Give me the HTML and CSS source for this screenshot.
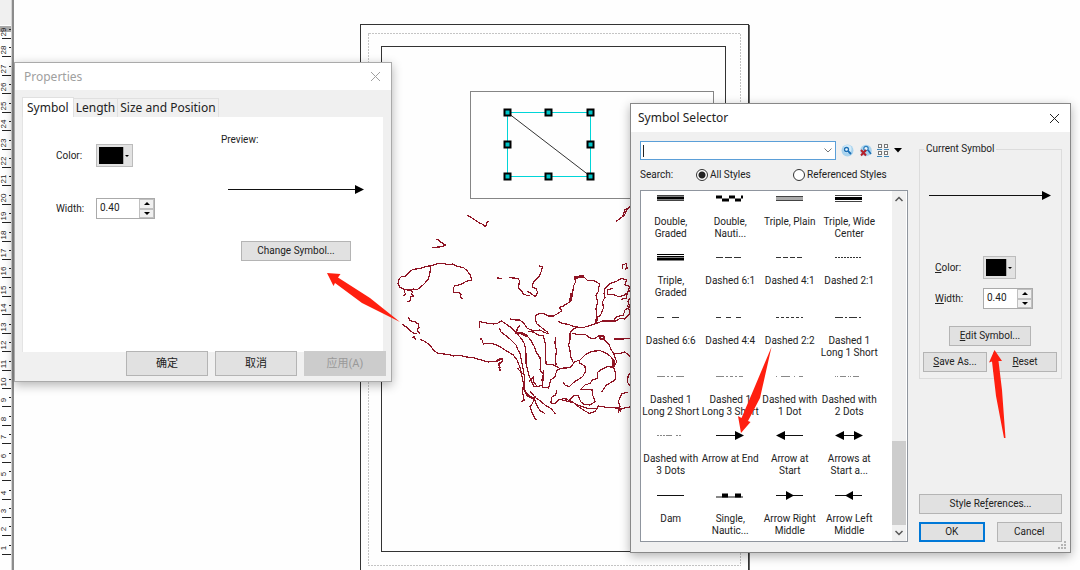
FILE: index.html
```html
<!DOCTYPE html>
<html lang="en">
<head>
<meta charset="utf-8">
<title>Symbol Selector</title>
<link rel="stylesheet" href="styles.css">
</head>
<body>
<main class="desktop">
  <svg class="layer" aria-hidden="true">
    <rect x="0" y="0" width="11" height="25" fill="#f0f0f0"/>
    <rect x="0" y="26" width="11" height="6" fill="#a8a8a8"/>
    <rect x="11" y="0" width="1" height="2000" fill="#d4d4d4"/>
    <rect x="12" y="0" width="2" height="2000" fill="#8c8c8c"/>
    <g id="ruler" class="ruler"></g>

    <g fill="none" shape-rendering="crispEdges">
      <path d="M360.500 600V24.500H748.500V600" stroke="#333"/>
      <path d="M749.500 25V600" stroke="#666"/>
      <rect x="368.500" y="33.500" width="372" height="532" stroke="#c4c4c4" stroke-dasharray="2 1"/>
      <rect x="381.500" y="46.500" width="344" height="505" stroke="#333"/>
      <rect x="470.500" y="91.500" width="243" height="107" stroke="#858585"/>
      <rect x="507.500" y="112.500" width="83" height="64" stroke="#00d5d8"/>
    </g>
    <path d="M508 113L590 176" stroke="#333"/>
    <g class="handles">
      <rect x="504.500" y="109.500" width="6" height="6"/><rect x="545.500" y="109.500" width="6" height="6"/><rect x="587.500" y="109.500" width="6" height="6"/>
      <rect x="504.500" y="141.500" width="6" height="6"/><rect x="587.500" y="141.500" width="6" height="6"/>
      <rect x="504.500" y="173.500" width="6" height="6"/><rect x="545.500" y="173.500" width="6" height="6"/><rect x="587.500" y="173.500" width="6" height="6"/>
    </g>

    <g class="rivers" transform="translate(380 190) scale(.3333)">
      <path d="M262 76L275 83 285 90 297 98 308 103 317 110 322 95 327 94"/>
      <path d="M167 149L175 150 185 158 196 165 190 169 178 171 157 172"/>
      <path d="M84 300L72 298 60 292 54 280 57 268 64 260 78 258 86 249 98 238 118 236 138 230 158 226 172 221 190 221 205 224 218 222 232 230 250 232 262 243 272 257 275 270 258 274 245 282 224 288 220 294 221 306 238 309 244 314 240 320 248 328"/>
      <path d="M145 227H160M152 226L150 248 145 268 130 284 112 299 100 297 84 300"/>
      <path d="M70 318L76 312 72 300M84 300L98 304 95 312 101 318 92 320 90 333 82 335"/>
      <path d="M85 382L90 392 104 395 115 402 117 412 111 420 116 426 121 431"/>
      <path d="M67 403L80 412 92 423 102 430 110 431M97 442L103 440 107 451"/>
      <path d="M121 448L136 455 150 466 160 480 172 489 190 492 205 493 220 498 240 496 258 501 275 502 300 509 325 516 345 514 358 512 363 504 368 508 366 516 354 521 360 533 357 540 364 542"/>
    </g>
    <g class="rivers" transform="translate(490 190) scale(.3333)">
      <path d="M21 264L36 265M57 263L84 265 88 272 86 295 95 303 100 312 110 316 120 318"/>
      <path d="M148 228L158 230 153 246 146 262 134 272 128 282 129 292 138 296 143 308 136 320 125 312 112 303"/>
      <path d="M-32 413L-32 395 -12 399 10 402 22 400 35 393 48 402 62 412 72 422 84 434 95 447 104 462 108 490 108 520 118 560 132 590 150 590"/>
      <path d="M28 413L32 425 45 435 60 447 78 465 84 480 90 490 95 515 98 530 104 565 103 600 112 618 125 625 137 618"/>
      <path d="M-30 447L-25 447 -20 462 0 460 15 463 30 470 50 483 70 495 80 508 90 532 95 555 100 580 98 610 103 632 92 634M82 533L92 546 104 556"/>
      <path d="M0 514L15 515 25 508 33 504 38 511 30 522 27 533 33 542"/>
      <path d="M60 387L75 390 88 390 98 396 105 405 112 415 130 422 150 420 165 428 175 432 171 425 155 413 140 401 136 388 138 376 150 370 162 371 175 378 190 378 205 370 215 362 208 352 220 348 240 335 248 310 250 290 258 272 252 264 272 256 285 264 292 271 315 273 328 282 325 305 318 315 323 335 318 355 320 380 316 400"/>
      <path stroke-width="8" d="M254 263L268 261 282 260M246 308L241 333M371 510V532M385 656L394 662"/>
      <path d="M205 394L218 401 235 403 255 411 282 412 312 403 338 393 355 393 378 393 390 385 405 387 415 375 422 370"/>
      <path d="M90 407L82 414 80 428 92 427 108 434 122 450 132 468 138 485 150 503 152 525 150 540 160 552 156 570 158 590"/>
      <path d="M75 430L95 432 110 440M115 425L130 426 142 434 160 438 166 460 167 490 168 522 190 524 200 530 210 536 240 533 255 515 270 510 285 495 305 484 330 482 345 488 358 496 371 510"/>
      <path d="M196 440L195 460 199 480 197 505 198 524 190 527"/>
      <path d="M262 412L248 418 240 430 240 450 236 465 240 482 242 500 250 518"/>
      <path d="M245 430L265 434 285 433 300 444 315 446 325 438 340 438 344 450 356 462 364 480 372 492 390 490 405 486 415 495 422 502"/>
      <path d="M330 437h12v10h-12zM372 447H400L422 444"/>
      <path d="M266 510L270 520 285 528 286 545 278 560 262 570 250 578 238 590 226 586 218 575"/>
      <path d="M118 575L130 560 130 575 142 590 155 585M160 540L158 592 176 594 182 570 195 560 200 542 212 535 240 533"/>
      <path d="M371 492L380 515 371 532 352 530 335 538 322 548 322 565 308 570 300 580 285 585 272 598 308 600 308 615 315 635 305 642M371 532L377 552 375 570 362 578 350 585 342 595 335 607"/>
      <path d="M200 600L197 615 184 622 183 640 195 642 205 630 225 625 238 632 250 618 265 617 272 635 282 643 298 645 310 640M215 630L235 634 255 640 265 650 280 660 298 670 315 665 325 648 350 652 378 654 400 655 422 650"/>
      <path d="M220 624L245 635 262 645 292 655 320 655M385 670L390 650 385 635 395 612 412 606M422 545L414 560 413 578 422 590"/>
      <path d="M105 602L118 618 132 625 128 640 120 650 125 665 135 685 142 691M120 603L135 622 150 632 165 645 182 655 197 672M132 625L140 645 150 662 165 671"/>
      <path d="M378 95L392 84 404 75 410 60 422 48M398 80L405 58 422 52M398 238L398 225 408 221 412 235 404 238"/>
      <path d="M422 290L405 285 410 270 395 265 378 275 360 280 345 295 342 310 345 322 338 335 340 355 332 375 322 382 320 400"/>
      <path d="M370 295L352 300 352 312 372 314 385 320 402 316 422 300M422 285L415 300 408 325 392 328M422 320L414 335 420 350 405 360 400 375 380 380 370 393M412 345L422 372"/>
    </g>
  </svg>

  <section class="window properties" aria-label="Properties">
    <header class="titlebar inactive">
      <h2 class="title">Properties</h2>
      <button class="close" type="button" aria-label="Close"><svg width="11" height="11"><path d="M1 1L10 10M10 1L1 10" stroke="currentColor"/></svg></button>
    </header>
    <div class="tabs" role="tablist">
      <button class="tab active" role="tab" type="button">Symbol</button>
      <button class="tab" role="tab" type="button">Length</button>
      <button class="tab" role="tab" type="button">Size and Position</button>
    </div>
    <div class="panel">
      <form class="fields">
        <label class="field-label" for="p-color">Color:</label>
        <button id="p-color" class="color" type="button"><span class="swatch"></span><span class="drop"></span></button>
        <label class="field-label" for="p-width">Width:</label>
        <div class="spinner wide">
          <input id="p-width" type="text" value="0.40">
          <div class="steps"><button type="button" aria-label="Increase"><span class="up"></span></button><button type="button" aria-label="Decrease"><span class="down"></span></button></div>
        </div>
      </form>
      <div class="preview">
        <p class="preview-label">Preview:</p>
        <svg class="preview-line" viewBox="0 0 136 10" width="136" height="10"><path d="M0 5.500H128" stroke="#111"/><path d="M127 1V10L136 5.500Z"/></svg>
        <button class="btn change" type="button">Change Symbol...</button>
      </div>
    </div>
    <footer class="actions">
      <button class="btn" type="button">确定</button>
      <button class="btn" type="button">取消</button>
      <button class="btn" type="button" disabled>应用(A)</button>
    </footer>
  </section>

  <section class="window selector" aria-label="Symbol Selector">
    <header class="titlebar">
      <h2 class="title">Symbol Selector</h2>
      <button class="close" type="button" aria-label="Close"><svg width="11" height="11"><path d="M1 1L10 10M10 1L1 10" stroke="currentColor"/></svg></button>
    </header>
    <div class="selector-body">
      <div class="browse">
        <div class="searchbar">
          <div class="combo">
            <span class="caret"></span>
            <input type="text" aria-label="Search text">
            <button type="button" aria-label="Search history"><svg width="8" height="5"><path d="M0.500 0.500L4 4 7.500 0.500" fill="none" stroke="#777"/></svg></button>
          </div>
          <button class="tool" type="button" aria-label="Search"><svg width="13" height="13" viewBox="0 0 13 13"><circle cx="6.500" cy="6.500" r="6" fill="#a9d3ee"/><circle cx="6.500" cy="5" r="4" fill="#d4ecfa"/><circle cx="5.500" cy="5.500" r="2" fill="#eef9ff" stroke="#1c6fb5" stroke-width="1.300"/><path d="M7 7L10 10" stroke="#1c6fb5" stroke-width="1.800"/></svg></button>
          <button class="tool" type="button" aria-label="Clear search"><svg width="13" height="13" viewBox="0 0 13 13"><circle cx="7" cy="6.500" r="5.800" fill="#a9d3ee"/><circle cx="7" cy="4.500" r="2.200" fill="#eef9ff" stroke="#2c7dbd" stroke-width="1.200"/><path d="M9 6L12 10" stroke="#1c6fb5" stroke-width="1.600"/><path d="M2 6L7 11.500M7 6L2 11.500" stroke="#b5222c" stroke-width="2"/></svg></button>
          <button class="tool views" type="button" aria-label="View"><svg width="12" height="13" viewBox="0 0 12 13"><g fill="#fff" stroke="#777"><rect x="1.500" y=".5" width="3" height="3"/><rect x="7.500" y=".5" width="3" height="3"/><rect x="1.500" y="7.500" width="3" height="3"/><rect x="7.500" y="7.500" width="3" height="3"/></g><path d="M0 5.500H5M7 5.500H12M0 12.500H5M7 12.500H12" stroke="#3f86b8"/></svg><svg width="8" height="5"><path d="M0 0H8L4 4.500Z"/></svg></button>
        </div>
        <div class="scope">
          <span class="scope-title">Search:</span>
          <label class="radio all"><input type="radio" name="scope" checked>All Styles</label>
          <label class="radio"><input type="radio" name="scope">Referenced Styles</label>
        </div>
        <div class="list">
          <ul class="symbols">
            <li><svg class="sym"><path d="M0 3.500H27M0 8.500H27" stroke="#444"/><path d="M0 6H27" stroke="#000" stroke-width="3"/></svg>Double,<br>Graded</li>
            <li><svg class="sym"><path d="M0 5H6M13 5H19M25 5H27M6 8H13M19 8H25" stroke="#000" stroke-width="3"/></svg>Double,<br>Nauti...</li>
            <li><svg class="sym"><path d="M0 6.500H27" stroke="#aaa" stroke-width="3"/><path d="M0 4.500H27M0 8.500H27" stroke="#444"/></svg>Triple, Plain</li>
            <li><svg class="sym"><path d="M0 3.500H27M0 9.500H27" stroke="#444"/><path d="M0 6.500H27" stroke="#000" stroke-width="3"/></svg>Triple, Wide<br>Center</li>
            <li><svg class="sym"><path d="M0 3.500H27M0 5.500H27" stroke="#000"/><path d="M0 8H27" stroke="#000" stroke-width="3"/></svg>Triple,<br>Graded</li>
            <li><svg class="sym"><path class="dash" stroke-dasharray="7 2" d="M0 6.500H27"/></svg>Dashed 6:1</li>
            <li><svg class="sym"><path class="dash" stroke-dasharray="5 2" d="M0 6.500H27"/></svg>Dashed 4:1</li>
            <li><svg class="sym"><path class="dash" stroke-dasharray="2 1" d="M0 6.500H27"/></svg>Dashed 2:1</li>
            <li><svg class="sym"><path class="dash" stroke-dasharray="7 8" d="M0 6.500H27"/></svg>Dashed 6:6</li>
            <li><svg class="sym"><path class="dash" stroke-dasharray="5 5" d="M0 6.500H27"/></svg>Dashed 4:4</li>
            <li><svg class="sym"><path class="dash" stroke-dasharray="3 2" d="M0 6.500H27"/></svg>Dashed 2:2</li>
            <li><svg class="sym"><path class="dash" stroke-dasharray="8 2 2 2" d="M0 6.500H27"/></svg>Dashed 1<br>Long 1 Short</li>
            <li><svg class="sym"><path class="dash pale" stroke-dasharray="8 2 2 2 2 3" d="M0 6.500H27"/></svg>Dashed 1<br>Long 2 Short</li>
            <li><svg class="sym"><path class="dash pale" stroke-dasharray="8 2 2 2 3 2 2 2" d="M0 6.500H27"/></svg>Dashed 1<br>Long 3 Short</li>
            <li><svg class="sym"><path class="dash pale" stroke-dasharray="1 4 9 4" d="M0 6.500H27"/></svg>Dashed with<br>1 Dot</li>
            <li><svg class="sym"><path class="dash pale" stroke-dasharray="1 1 1 2 6 2" d="M0 6.500H25"/></svg>Dashed with<br>2 Dots</li>
            <li><svg class="sym"><path class="dash pale" stroke-dasharray="2 1 2 1 2 1 6 4" d="M0 6.500H25"/></svg>Dashed with<br>3 Dots</li>
            <li><svg class="sym"><path d="M0 6.500H20" stroke="#111"/><path d="M19 2V11L28 6.500Z"/></svg>Arrow at End</li>
            <li><svg class="sym"><path d="M8 6.500H27" stroke="#111"/><path d="M9 2V11L0 6.500Z"/></svg>Arrow at<br>Start</li>
            <li><svg class="sym"><path d="M8 6.500H20" stroke="#111"/><path d="M9 2V11L0 6.500ZM19 2V11L28 6.500Z"/></svg>Arrows at<br>Start a...</li>
            <li><svg class="sym"><path d="M0 6.500H27" stroke="#111"/></svg>Dam</li>
            <li><svg class="sym"><path d="M0 8H27" stroke="#888" stroke-width="2"/><path d="M6 6.500H12M19 6.500H25" stroke="#000" stroke-width="4"/></svg>Single,<br>Nautic...</li>
            <li><svg class="sym"><path d="M0 6.500H27" stroke="#111"/><path d="M10 2V11L18 6.500Z"/></svg>Arrow Right<br>Middle</li>
            <li><svg class="sym"><path d="M0 6.500H27" stroke="#111"/><path d="M18 2V11L10 6.500Z"/></svg>Arrow Left<br>Middle</li>
          </ul>
          <div class="scrollbar">
            <button type="button" aria-label="Scroll up"><svg width="8" height="6"><path d="M.5 5L4 1.500 7.500 5" fill="none" stroke="#555" stroke-width="1.500"/></svg></button>
            <div class="track"><div class="thumb"></div></div>
            <button type="button" aria-label="Scroll down"><svg width="8" height="6"><path d="M.5 1L4 4.500 7.500 1" fill="none" stroke="#555" stroke-width="1.500"/></svg></button>
          </div>
        </div>
      </div>
      <div class="current">
        <fieldset class="group">
          <legend>Current Symbol</legend>
          <svg class="current-line" viewBox="0 0 122 10" width="122" height="10"><path d="M0 5.500H114" stroke="#111"/><path d="M113 1V10L122 5.500Z"/></svg>
          <div class="fields compact">
            <label class="field-label" for="s-color"><u>C</u>olor:</label>
            <button id="s-color" class="color small" type="button"><span class="swatch"></span><span class="drop"></span></button>
            <label class="field-label" for="s-width"><u>W</u>idth:</label>
            <div class="spinner">
              <input id="s-width" type="text" value="0.40">
              <div class="steps"><button type="button" aria-label="Increase"><span class="up"></span></button><button type="button" aria-label="Decrease"><span class="down"></span></button></div>
            </div>
          </div>
          <button class="btn edit" type="button"><span><u>E</u>dit Symbol...</span></button>
          <div class="pair tight">
            <button class="btn" type="button"><span><u>S</u>ave As...</span></button>
            <button class="btn" type="button"><span><u>R</u>eset</span></button>
          </div>
        </fieldset>
        <div class="confirm">
          <button class="btn" type="button"><span>Style Re<u>f</u>erences...</span></button>
          <div class="pair">
            <button class="btn default" type="button">OK</button>
            <button class="btn" type="button">Cancel</button>
          </div>
        </div>
      </div>
    </div>
    <svg class="grip" width="9" height="9"><path d="M6 0h2v2h-2zM3 3h2v2h-2zM6 3h2v2h-2zM0 6h2v2h-2zM3 6h2v2h-2zM6 6h2v2h-2z" fill="#b4b4b4"/></svg>
  </section>

  <svg class="layer pointers" aria-hidden="true">
    <path d="M327 273L340.500 274 338 277.500 370 298 400 322 362 303 335 283 333.500 286Z"/>
    <path d="M771.500 347L760 398 748 421 750.500 422 741 433 738 416 741.500 418 753 391Z"/>
    <path d="M994.500 350L1002 361 998.500 361 1002 390 1005.500 438 1004 438 996 396 992 361.500 989 362.500Z"/>
  </svg>
</main>
<script src="ruler.js"></script>
</body>
</html>
```

FILE: styles.css
```css
* { box-sizing: border-box; }
body { margin: 0; font: 10px/12px Roboto, "Noto Sans CJK SC", sans-serif; color: #222; }
button, input { font: inherit; color: inherit; margin: 0; padding: 0; }
button { border: 0; background: none; }
h2, p, ul { margin: 0; padding: 0; font-weight: 400; list-style: none; }
svg { display: block; }

.desktop { position: relative; min-height: 100vh; overflow: hidden; background: #fefefe; }
.layer { position: absolute; inset: 0; width: 100%; height: 100%; }
.pointers { fill: #ff1f0f; pointer-events: none; }
.ruler { font: 8px "Liberation Sans", sans-serif; fill: #222; stroke: none; }
.handles { fill: #00c4c8; stroke: #000; stroke-width: 2; }
.rivers { fill: none; stroke: #8f1424; stroke-width: 3.6; stroke-linejoin: bevel; shape-rendering: crispEdges; }

.window { position: absolute; display: flex; flex-direction: column; background: #f0f0f0; border: 1px solid #aaa; box-shadow: 0 3px 10px rgba(0, 0, 0, .3); }
.properties { left: 14px; top: 62px; width: 378px; }
.selector { left: 630px; top: 103px; width: 441px; border-color: #888; }

.titlebar { display: flex; align-items: center; justify-content: space-between; height: 27px; padding: 0 10px 0 9px; background: #fff; }
.selector .titlebar { height: 28px; padding-left: 7px; }
.title { font: 12px/16px "Noto Sans", sans-serif; }
.inactive { color: #a0a0a0; }
.close { padding: 0; }

.tabs { display: flex; align-items: flex-end; padding: 7px 8px 0 7px; }
.tab { height: 19px; padding: 0 2px; border: 1px solid #e0e0e0; border-width: 1px 1px 0 0; font: 12px/16px "Noto Sans", sans-serif; }
.tab.active { height: 20px; padding: 0 4px; border-left-width: 1px; background: #fff; }

.panel { display: flex; justify-content: space-between; height: 235px; margin: 0 8px 0 7px; padding: 17px 19px 0 32px; background: #fff; border-left: 1px solid #e4e4e4; }
.fields { display: grid; grid-template-columns: 41px auto; align-content: start; align-items: center; row-gap: 31px; padding-top: 10px; }
.properties .field-label { padding-left: 1px; }
.color { display: flex; align-items: center; justify-content: space-between; width: 37px; height: 23px; padding: 2px 3px 2px 2px; border: 1px solid #bcbcbc; background: #e2e2e2; }
.swatch { width: 24px; height: 17px; background: #000; }
.drop { width: 6px; height: 17px; border-left: 1px solid #aaa; display: flex; align-items: center; justify-content: flex-end; }
.drop::after { content: ""; border: 2px solid transparent; border-top-color: #000; border-bottom: 0; }
.color.small { width: 33px; }
.small .swatch { width: 20px; }
.spinner { display: flex; width: 50px; height: 21px; border: 1px solid #aaa; background: #fff; }
.spinner.wide { width: 59px; }
.spinner input { flex: 1; min-width: 0; padding: 0 0 2px 3px; border: 0; background: none; outline: 0; }
.steps { display: flex; flex-direction: column; width: 15px; }
.steps button { flex: 1; display: flex; align-items: center; justify-content: center; border: 1px solid #c0c0c0; background: #f0f0f0; }
.up, .down { border: 3px solid transparent; }
.up { border-bottom-color: #000; border-top: 0; }
.down { border-top-color: #000; border-bottom: 0; }

.preview { display: flex; flex-direction: column; width: 143px; }
.preview-line { margin: 38px 0 47px 7px; fill: #000; }
.change { width: 110px; height: 21px; margin-left: 20px; }
.btn { display: flex; align-items: center; justify-content: center; height: 20px; border: 1px solid #b4b4b4; background: #e1e1e1; white-space: nowrap; }
.btn:disabled { background: #ccc; color: #999; border-color: #ccc; }
.actions { display: flex; justify-content: flex-end; gap: 7px; margin-top: -1px; padding: 0 5px 5px; }
.actions .btn { width: 82px; height: 25px; font-size: 11px; }

.selector-body { display: flex; gap: 11px; padding: 9px 10px 10px 9px; }
.browse { flex: none; width: 268px; }
.searchbar { display: flex; align-items: center; gap: 5px; }
.combo { display: flex; align-items: center; width: 196px; height: 19px; padding: 0 3px 0 2px; border: 1px solid #5b9fd8; background: #fff; }
.combo input { flex: 1; min-width: 0; border: 0; outline: 0; background: none; }
.caret { width: 1px; height: 12px; background: #222; }
.tool { display: flex; align-items: center; gap: 5px; }
.scope { display: flex; align-items: center; height: 30px; }
.scope-title { width: 56px; }
.radio { display: flex; align-items: center; gap: 2px; }
.radio.all { width: 97px; }
.radio input { appearance: none; width: 12px; height: 12px; border: 1px solid #333; border-radius: 50%; background: #fff; }
.radio input:checked { background: radial-gradient(circle, #222 0 3px, #fff 4px); }

.list { display: flex; justify-content: space-between; height: 352px; padding-right: 1px; overflow: hidden; border: 1px solid #8f959e; background: #fff; }
.symbols { display: grid; grid-template-columns: repeat(4, 1fr); grid-template-rows: repeat(6, 1fr); width: 238px; height: 356px; }
.symbols li { padding-top: 1px; text-align: center; white-space: nowrap; }
.sym { width: 28px; height: 12px; margin: 0 auto 12px; }
.dash { stroke: #333; }
.pale { stroke: #888; }
.scrollbar { display: flex; flex-direction: column; width: 14px; background: #f0f0f0; }
.scrollbar button { display: flex; align-items: center; justify-content: center; height: 16px; }
.track { flex: 1; display: flex; align-items: flex-end; }
.thumb { width: 100%; height: 84px; background: #cdcdcd; }

.current { flex: 1; display: flex; flex-direction: column; justify-content: space-between; padding-top: 1px; }
.group { display: flex; flex-direction: column; margin: 0; padding: 0 4px 6px 3px; border: 1px solid #dcdcdc; }
.group legend { margin-left: 1px; padding: 0 2px; line-height: 14px; }
.current-line { margin: 34px 6px; fill: #000; }
.compact { grid-template-columns: 48px auto; row-gap: 9px; padding: 22px 0 17px 12px; }
.edit { width: 82px; margin: 0 0 6px 26px; }
.pair { display: grid; grid-template-columns: 1fr 1fr; gap: 12px; }
.pair.tight { gap: 6px; }
.confirm { display: flex; flex-direction: column; gap: 8px; }
.default { border: 2px solid #0078d7; }
.grip { position: absolute; right: 3px; bottom: 2px; }
```

FILE: ruler.js
```js
const NS = "http://www.w3.org/2000/svg";
const ruler = document.getElementById("ruler");
const step = 18.42;

for (let i = 0; i < 29; i++) {
  const y = 38 + i * step;
  const line = Math.round(y);
  const tick = document.createElementNS(NS, "path");
  tick.setAttribute("d", `M2 ${line}h9v1h-9zM9 ${line - 9}h2v1h-2z`);
  const label = document.createElementNS(NS, "text");
  label.setAttribute("transform", `translate(6 ${line - 6}) rotate(-90)`);
  label.setAttribute("text-anchor", "middle");
  label.textContent = 29 - i;
  ruler.append(tick, label);
}
```
